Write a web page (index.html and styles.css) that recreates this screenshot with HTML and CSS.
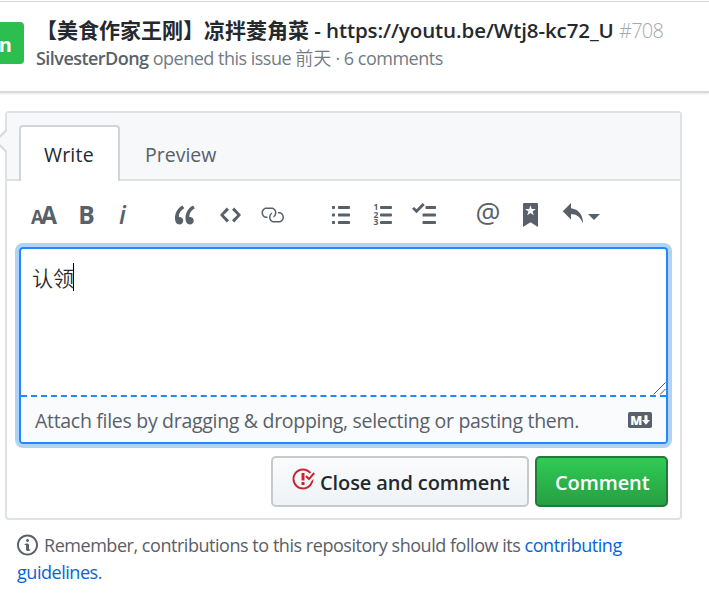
FILE: index.html
```html
<!DOCTYPE html>
<html lang="en">
<head>
<meta charset="utf-8">
<title>Issue #708</title>
<link rel="stylesheet" href="styles.css">
</head>
<body>
<header class="issue-header">
  <span class="state">Open</span>
  <div class="issue-info">
    <h1 class="title"><span class="title-cjk">【美食作家王刚】凉拌菱角菜</span><span class="title-url"> - https://youtu.be/Wtj8-kc72_U</span> <span class="number">#708</span></h1>
    <p class="meta"><strong>SilvesterDong</strong> <span>opened this issue <span class="cjk">前天</span> · 6 comments</span></p>
  </div>
</header>

<main class="main">
  <section class="comment-box">
    <svg class="box-arrow" width="13" height="26" viewBox="0 0 13 26"><path d="M13 1.5 1.5 13 13 24.5" fill="#f6f8fa" stroke="#d6dade" stroke-width="2"/></svg>
    <nav class="tabs">
      <a class="tab tab-active">Write</a>
      <a class="tab">Preview</a>
    </nav>
    <div class="toolbar">
      <svg class="w26" viewBox="0 0 26 24"><text class="glyph" x="0" y="21" font-size="20" textLength="12.5" lengthAdjust="spacingAndGlyphs">A</text><text class="glyph" x="10" y="21" font-size="25" textLength="16" lengthAdjust="spacingAndGlyphs">A</text></svg>
      <svg class="w15 g22" viewBox="0 0 15 24"><text class="glyph" x="-0.8" y="21" font-size="25" textLength="16.5" lengthAdjust="spacingAndGlyphs">B</text></svg>
      <svg class="w9 g24" viewBox="0 0 9 24"><text class="glyph italic" x="1" y="21" font-size="25">i</text></svg>
      <svg class="w21 g48" viewBox="0 0 14 16"><path d="M6.16 3.5C3.73 5.06 2.55 6.67 2.55 9.36c.16-.05.3-.05.44-.05 1.27 0 2.5.86 2.5 2.41 0 1.61-1.03 2.61-2.5 2.61-1.9 0-2.99-1.52-2.99-4.25 0-3.8 1.75-6.53 5.02-8.42L6.16 3.5zm7 0c-2.43 1.56-3.61 3.17-3.61 5.86.16-.05.3-.05.44-.05 1.27 0 2.5.86 2.5 2.41 0 1.61-1.03 2.61-2.5 2.61-1.89 0-2.98-1.52-2.98-4.25 0-3.8 1.75-6.53 5.02-8.42l1.14 1.84h-.01z"/></svg>
      <svg class="w21 g24" viewBox="0 0 14 16"><path d="M9.5 3L8 4.5 11.5 8 8 11.5 9.5 13 14 8 9.5 3zm-5 0L0 8l4.5 5L6 11.5 2.5 8 6 4.5 4.5 3z"/></svg>
      <svg class="w24 g19" viewBox="0 0 16 16"><path d="M4 9h1v1H4c-1.5 0-3-1.69-3-3.5S2.55 3 4 3h4c1.45 0 3 1.69 3 3.5 0 1.41-.91 2.72-2 3.25V8.59c.58-.45 1-1.27 1-2.09C10 5.22 8.98 4 8 4H4c-.98 0-2 1.22-2 2.5S3 9 4 9zm9-3h-1v1h1c1 0 2 1.22 2 2.5S13.98 12 13 12H9c-.98 0-2-1.22-2-2.5 0-.83.42-1.64 1-2.09V6.25c-1.09.53-2 1.84-2 3.25C6 11.31 7.55 13 9 13h4c1.45 0 3-1.69 3-3.5S14.5 6 13 6z"/></svg>
      <svg class="w18 g48" viewBox="0 0 12 16"><path d="M2 13c0 .59 0 1-.59 1H.59C0 14 0 13.59 0 13c0-.59 0-1 .59-1h.81c.59 0 .59.41.59 1H2zm2.59-9h6.81c.59 0 .59-.41.59-1 0-.59 0-1-.59-1H4.59C4 2 4 2.41 4 3c0 .59 0 1 .59 1zM1.41 7H.59C0 7 0 7.41 0 8c0 .59 0 1 .59 1h.81c.59 0 .59-.41.59-1 0-.59 0-1-.59-1h.01zm0-5H.59C0 2 0 2.41 0 3c0 .59 0 1 .59 1h.81c.59 0 .59-.41.59-1 0-.59 0-1-.59-1h.01zm10 5H4.59C4 7 4 7.41 4 8c0 .59 0 1 .59 1h6.81c.59 0 .59-.41.59-1 0-.59 0-1-.59-1h.01zm0 5H4.59C4 12 4 12.41 4 13c0 .59 0 1 .59 1h6.81c.59 0 .59-.41.59-1 0-.59 0-1-.59-1h.01z"/></svg>
      <svg class="w18 g24" viewBox="0 0 18 24"><rect x="6" y="3" width="12" height="3" rx="1"/><rect x="6" y="10.5" width="12" height="3" rx="1"/><rect x="6" y="18" width="12" height="3" rx="1"/><text class="digit" x="-0.4" y="7">1</text><text class="digit" x="-0.4" y="14.7">2</text><text class="digit" x="-0.4" y="22.4">3</text></svg>
      <svg class="w24 g20" viewBox="0 0 16 16"><path d="M15.41 9H7.59C7 9 7 8.59 7 8c0-.59 0-1 .59-1h7.81c.59 0 .59.41.59 1 0 .59 0 1-.59 1h.01zM9.59 4C9 4 9 3.59 9 3c0-.59 0-1 .59-1h5.81c.59 0 .59.41.59 1 0 .59 0 1-.59 1H9.59zM0 3.91l1.41-1.3L3 4.2 7.09 0 8.5 1.41 3 6.91l-3-3zM7.59 12h7.81c.59 0 .59.41.59 1 0 .59 0 1-.59 1H7.59C7 14 7 13.59 7 13c0-.59 0-1 .59-1z"/></svg>
      <svg class="w22 g41" viewBox="0 0 22 24"><text class="at" x="-1.5" y="20.3" textLength="25" lengthAdjust="spacingAndGlyphs">@</text></svg>
      <svg class="w15 g24" viewBox="0 0 10 16"><path d="M9 0H1C.27 0 0 .27 0 1v15l5-3.09L10 16V1c0-.73-.27-1-1-1zm-.78 4.25L6.36 5.61l.72 2.16c.06.22-.02.28-.2.17L5 6.6 3.12 7.94c-.19.11-.25.05-.2-.17l.72-2.16-1.86-1.36c-.17-.16-.14-.23.09-.23l2.3-.03.7-2.16h.25l.7 2.16 2.3.03c.23 0 .27.08.09.23h.01z"/></svg>
      <svg class="w21 g24" viewBox="0 0 14 16"><path d="M6 3.5c3.92.44 8 3.125 8 10-2.312-5.062-4.75-6-8-6V11L.5 5.5 6 0v3.5z"/></svg>
      <svg class="w12 g5" viewBox="0 0 12 24"><path d="M0 11h12l-6 6z"/></svg>
    </div>
    <div class="editor">
      <div class="input">认领<span class="caret"></span>
        <svg class="grip" width="13" height="13" viewBox="0 0 13 13"><path d="M.5 12.5 12.5.5M7 12.5 12.5 7" fill="none" stroke="#555" stroke-width="1"/></svg>
      </div>
      <div class="attach">
        <span>Attach files by dragging &amp; dropping, selecting or pasting them.</span>
        <svg class="md" width="24" height="16" viewBox="0 0 24 16"><rect width="24" height="16" rx="1.8"/><text class="md-letter" x="2.3" y="12.8" textLength="12" lengthAdjust="spacingAndGlyphs">M</text><path fill="#fff" d="M16.5 3.3h3V8H22l-4 4.8L14 8h2.5z"/></svg>
      </div>
    </div>
    <div class="actions">
      <button class="btn btn-close"><svg class="issue-closed" width="24" height="24" viewBox="0 0 16 16"><path d="M7 10h2v2H7v-2zm2-6H7v5h2V4zm1.5 1.5l-1 1L12 9l4-4.5-1-1L12 7l-1.5-1.5zM8 13.7A5.71 5.71 0 0 1 2.3 8c0-3.14 2.56-5.7 5.7-5.7 1.83 0 3.45.88 4.5 2.2l.92-.92A6.947 6.947 0 0 0 8 1C4.14 1 1 4.14 1 8s3.14 7 7 7 7-3.14 7-7l-1.52 1.52c-.66 2.41-2.86 4.19-5.48 4.19v-.01z"/></svg><span>Close and comment</span></button>
      <button class="btn btn-primary"><span>Comment</span></button>
    </div>
  </section>
  <div class="note">
    <div class="note-line"><svg class="info" width="21" height="24" viewBox="0 0 14 16"><path d="M6.3 5.69a.942.942 0 0 1-.28-.7c0-.28.09-.52.28-.7.19-.18.42-.28.7-.28.28 0 .52.09.7.28.18.19.28.42.28.7 0 .28-.09.52-.28.7a1 1 0 0 1-.7.3c-.28 0-.52-.11-.7-.3zM8 7.99c-.02-.25-.11-.48-.31-.69-.2-.19-.42-.3-.69-.31H6c-.27.02-.48.13-.69.31-.2.2-.3.44-.31.69h1v3c.02.27.11.5.31.69.2.2.42.31.69.31h1c.27 0 .48-.11.69-.31.2-.19.3-.42.31-.69H8V7.98v.01zM7 2.3c-3.14 0-5.7 2.54-5.7 5.68 0 3.14 2.56 5.7 5.7 5.7s5.7-2.55 5.7-5.7c0-3.15-2.56-5.69-5.7-5.69v.01zM7 .98c3.86 0 7 3.14 7 7s-3.14 7-7 7-7-3.12-7-7 3.14-7 7-7z"/></svg><span>Remember, contributions to this repository should follow its <a class="link">contributing</a></span></div>
    <div class="note-line"><span><a class="link">guidelines</a>.</span></div>
  </div>
</main>
</body>
</html>
```
FILE: styles.css
```css
* { box-sizing: border-box; }
body {
  margin: 0;
  height: 604px;
  overflow: hidden;
  background: #fff;
  color: #24292e;
  font-family: "Open Sans", "Noto Sans CJK SC", sans-serif;
  font-size: 19.5px;
}
h1, p { margin: 0; }
svg { flex: none; display: block; }

.issue-header {
  display: flex;
  height: 92px;
  margin-top: 1px;
  border-top: 1px solid #d5d8da;
  border-bottom: 2px solid #d9dadb;
  box-shadow: 0 1px 2px rgba(0, 0, 0, .1);
}
.state {
  display: flex;
  align-items: center;
  justify-content: flex-end;
  flex: none;
  width: 94px;
  height: 42px;
  margin: 20px 0 0 -70px;
  padding: 2px 12px 0 0;
  border-radius: 4px;
  background: #2cbe4e;
  color: #fff;
  font-size: 20px;
  font-weight: 700;
}
.issue-info { padding: 12px 0 0 12px; white-space: nowrap; }
.title { height: 30px; font-size: 20px; line-height: 30px; font-weight: 600; }
.title-cjk { font-family: "Noto Sans CJK SC", sans-serif; font-size: 21px; font-weight: 700; }
.title-url { font-size: 20.5px; letter-spacing: -.09px; white-space: pre; }
.number { color: #a3aab1; font-weight: 300; letter-spacing: -.7px; }
.meta { height: 26px; line-height: 26px; color: #727b85; font-size: 18px; letter-spacing: -.5px; }
.meta strong { color: #586069; font-weight: 600; letter-spacing: -.54px; }
.cjk { font-family: "Noto Sans CJK SC", sans-serif; font-weight: 350; letter-spacing: 0; }

.main { padding: 18px 27px 0 5px; }
.comment-box {
  position: relative;
  height: 409px;
  border: 2px solid #dfe2e5;
  border-radius: 4px;
}
.box-arrow { position: absolute; left: -13px; top: 15px; }
.tabs {
  display: flex;
  height: 68px;
  padding: 12px 0 0 12px;
  border-bottom: 2px solid #dfe2e5;
  background: #f6f8fa;
}
.tab {
  height: 56px;
  padding: 0 23px;
  border: 2px solid transparent;
  border-bottom: 0;
  line-height: 55px;
  color: #586069;
}
.tab-active {
  width: 101px;
  border-color: #d1d5da;
  border-radius: 4px 4px 0 0;
  background: #fff;
  color: #24292e;
  letter-spacing: .2px;
}
.toolbar { display: flex; height: 66px; padding: 22px 0 0 24px; fill: #586069; }
.toolbar svg { height: 24px; overflow: visible; }
.w9 { width: 9px; } .w12 { width: 12px; } .w15 { width: 15px; } .w18 { width: 18px; }
.w21 { width: 21px; } .w22 { width: 22px; } .w24 { width: 24px; } .w26 { width: 26px; }
.g5 { margin-left: 5px; } .g19 { margin-left: 19px; } .g20 { margin-left: 20px; }
.g22 { margin-left: 22px; } .g24 { margin-left: 24px; }
.g41 { margin-left: 41px; } .g48 { margin-left: 48px; }
.glyph { font-weight: 700; }
.italic { font-style: italic; font-weight: 600; }
.digit { font-size: 8.5px; font-weight: 700; }
.at { font-size: 27px; }

.editor {
  width: 649px;
  height: 197px;
  margin-left: 12px;
  border: 2px solid #2188ff;
  border-radius: 4px;
  box-shadow: 0 0 0 4px #b2d2f4;
}
.input {
  position: relative;
  display: flex;
  height: 148px;
  padding: 13px 0 0 11px;
  border-bottom: 2px dashed #2188ff;
  font-family: "Noto Sans CJK SC", sans-serif;
  font-size: 21px;
  font-weight: 350;
  line-height: 30px;
}
.caret { width: 1px; height: 28px; margin: 1px 0 0 -1px; background: #000; }
.grip { position: absolute; right: 0; bottom: 0; }
.attach {
  display: flex;
  align-items: center;
  justify-content: space-between;
  height: 45px;
  padding: 1px 14px 0;
  border-radius: 0 0 2px 2px;
  background: #fafbfc;
  color: #586069;
  letter-spacing: -.3px;
  white-space: nowrap;
}
.md { fill: #586069; letter-spacing: 0; margin-top: -1px; }
.md-letter { fill: #fff; font-size: 13px; font-weight: 800; }

.actions { display: flex; justify-content: flex-end; gap: 6px; padding: 12px 12px 0 0; }
.btn {
  display: flex;
  align-items: center;
  height: 51px;
  padding: 2px 0 0 18px;
  border: 2px solid #c6cacd;
  border-radius: 5px;
  background: linear-gradient(#fafbfc, #eff3f6);
  color: #24292e;
  font: 600 20px "Open Sans", sans-serif;
  letter-spacing: -.1px;
  white-space: nowrap;
}
.btn-close { width: 258px; }
.btn-primary {
  width: 133px;
  border-color: #217a37;
  background: linear-gradient(#2fcb53, #279f43);
  color: #fff;
}
.issue-closed { fill: #cb2431; margin: -8px 5px 0 0; }

.note { padding: 11px 0 0 12px; color: #586069; font-size: 18px; letter-spacing: -.46px; white-space: nowrap; }
.note-line { display: flex; align-items: center; height: 27px; }
.info { margin-right: 6px; fill: #586069; }
.link { color: #0366d6; }
```
